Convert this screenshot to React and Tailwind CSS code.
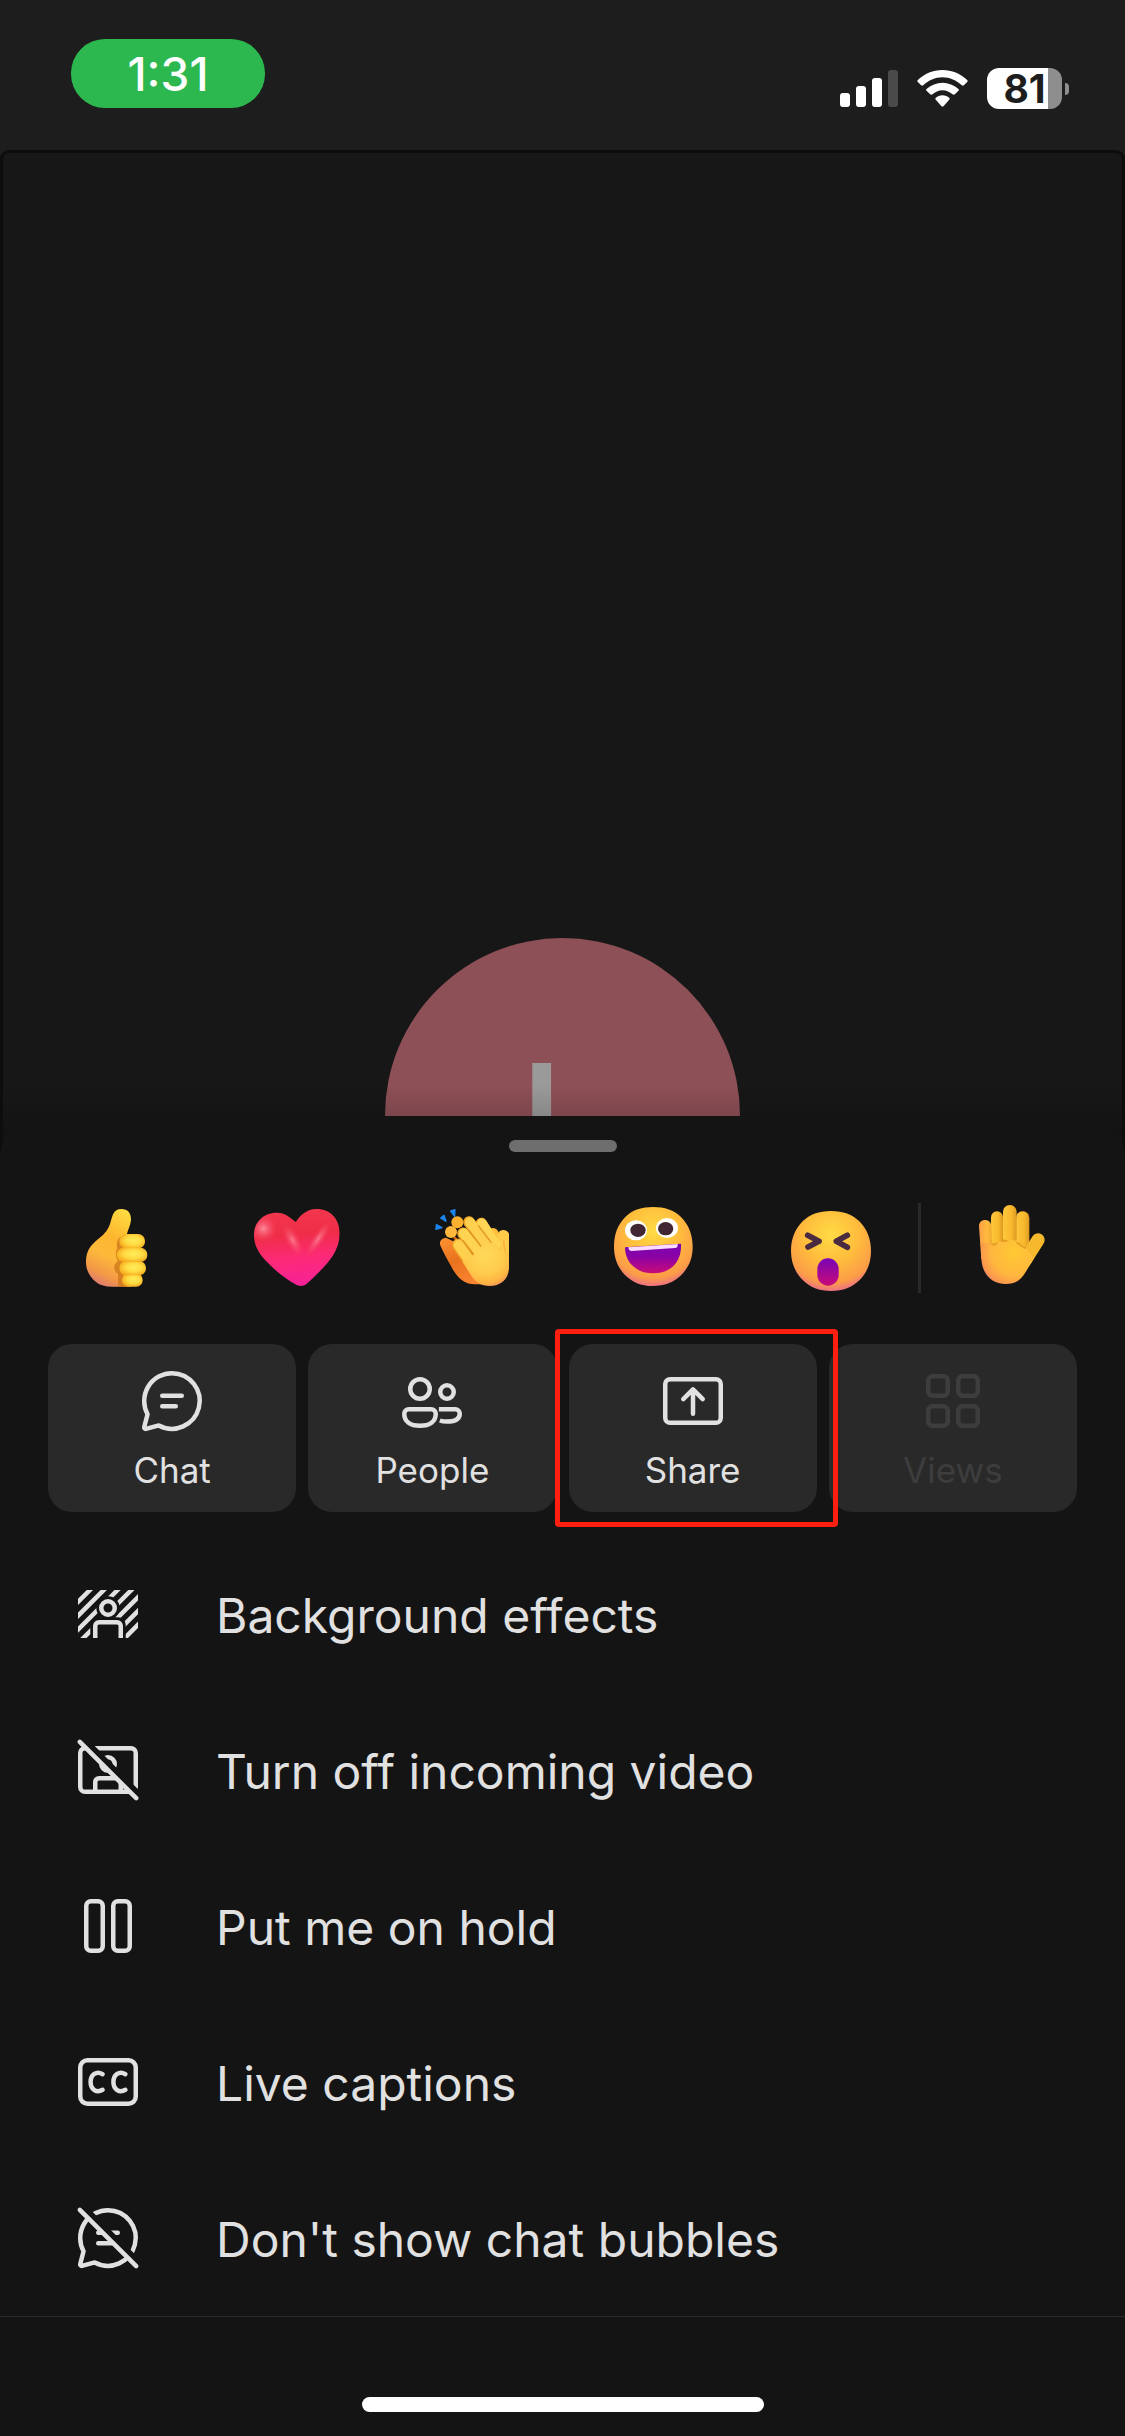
import React from 'react';

const BUBBLE =
  'M12 2.75a9.25 9.25 0 1 1-4.4 17.4L3.3 21.3a.5.5 0 0 1-.55-.65l1.1-4.25A9.25 9.25 0 0 1 12 2.75Z';

// 24 unit line icon, drawn at 72px
const Icon = ({ children }) => (
  <svg
    viewBox="0 0 24 24"
    className="w-18 h-18 shrink-0"
    fill="none"
    stroke="currentColor"
    strokeWidth="1.5"
    strokeLinecap="round"
    strokeLinejoin="round"
    aria-hidden="true"
  >
    {children}
  </svg>
);

// Diagonal slash that leaves a gap in the shape under it
const SlashedIcon = ({ id, children }) => (
  <Icon>
    <mask id={id} maskUnits="userSpaceOnUse" x="0" y="0" width="24" height="24">
      <rect width="24" height="24" fill="white" stroke="none" />
      <path d="M3 .9 23.1 21" stroke="black" strokeWidth="2.1" />
    </mask>
    <g mask={`url(#${id})`}>{children}</g>
    <path d="m2.6 2.6 18.8 18.8" />
  </Icon>
);

const ChatIcon = () => (
  <Icon>
    <path d={BUBBLE} />
    <path d="M8.75 10.25h6.5M8.75 13.75h4.5" />
  </Icon>
);

const PeopleIcon = () => (
  <Icon>
    <circle cx="8" cy="8" r="3.25" />
    <circle cx="17" cy="9" r="2.25" />
    <path d="M4.25 14.75h7.5a1.5 1.5 0 0 1 1.5 1.5c0 2.6-2 4-5.25 4s-5.25-1.4-5.25-4a1.5 1.5 0 0 1 1.5-1.5Z" />
    <path
      d="M14.3 14.75h5.45a1.5 1.5 0 0 1 1.5 1.5c0 1.9-1.8 2.6-4.25 2.6-.9 0-1.7-.1-2.4-.35"
      strokeLinecap="butt"
    />
  </Icon>
);

const ShareIcon = () => (
  <Icon>
    <rect x="2.75" y="4.75" width="18.5" height="14.5" rx="1.6" />
    <path d="M12 16.25V8.25M8.75 11.4 12 8.1l3.25 3.3" />
  </Icon>
);

const ViewsIcon = () => (
  <Icon>
    <rect x="3.75" y="3.75" width="6.5" height="6.5" rx="1.4" />
    <rect x="13.75" y="3.75" width="6.5" height="6.5" rx="1.4" />
    <rect x="3.75" y="13.75" width="6.5" height="6.5" rx="1.4" />
    <rect x="13.75" y="13.75" width="6.5" height="6.5" rx="1.4" />
  </Icon>
);

const BackgroundIcon = () => (
  <Icon>
    <mask id="person-cut" maskUnits="userSpaceOnUse" x="2" y="4" width="20" height="16">
      <rect x="2" y="4" width="20" height="16" fill="white" stroke="none" />
      <circle cx="12" cy="10" r="3.9" fill="black" stroke="none" />
      <path d="M6.1 20v-4.3a2.6 2.6 0 0 1 2.6-2.6h6.6a2.6 2.6 0 0 1 2.6 2.6V20Z" fill="black" stroke="none" />
    </mask>
    <path
      mask="url(#person-cut)"
      strokeLinecap="butt"
      d="M0 10 10 0M0 14.6 14.6 0M0 19.2 19.2 0M0 23.8 23.8 0M4.4 24 28.4 0M9 24 33 0M13.6 24 37.6 0"
    />
    <circle cx="12" cy="10" r="2.25" />
    <path d="M7.75 20v-4a1.25 1.25 0 0 1 1.25-1.25h6A1.25 1.25 0 0 1 16.25 16v4" strokeLinecap="butt" />
  </Icon>
);

const VideoOffIcon = () => (
  <SlashedIcon id="video-off">
    <rect x="2.75" y="4.75" width="18.5" height="14.5" rx="1.6" />
    <circle cx="12" cy="10" r="2.25" />
    <path d="M7.75 19.25V16A1.25 1.25 0 0 1 9 14.75h6A1.25 1.25 0 0 1 16.25 16v3.25" />
  </SlashedIcon>
);

const HoldIcon = () => (
  <Icon>
    <rect x="4.75" y="3.75" width="5.5" height="16.5" rx="1.5" />
    <rect x="13.75" y="3.75" width="5.5" height="16.5" rx="1.5" />
  </Icon>
);

const CaptionsIcon = () => (
  <Icon>
    <rect x="2.75" y="4.75" width="18.5" height="14.5" rx="2.4" />
    <path d="M10.2 9.4C8.2 8.2 6.2 9.5 6.2 12s2 3.8 4 2.6M17.8 9.4c-2-1.2-4 .1-4 2.6s2 3.8 4 2.6" />
  </Icon>
);

const BubblesOffIcon = () => (
  <SlashedIcon id="bubbles-off">
    <path d={BUBBLE} />
    <path d="M8.75 10.25h6.5M8.75 13.75h4.5" />
  </SlashedIcon>
);

const ThumbsUp = () => (
  <svg viewBox="36 69 270 270" className="w-[90px] h-[90px]">
    <defs>
      <linearGradient id="thumb" x1=".65" y1="0" x2=".35" y2="1">
        <stop offset="0" stopColor="#ffd83f" />
        <stop offset=".35" stopColor="#fcb52e" />
        <stop offset=".6" stopColor="#fdb93a" />
        <stop offset=".85" stopColor="#f39748" />
        <stop offset="1" stopColor="#dc7a72" />
      </linearGradient>
      <radialGradient id="knuckle" cx=".55" cy=".45" r=".6">
        <stop offset="0" stopColor="#ffec5c" />
        <stop offset=".5" stopColor="#ffdc43" />
        <stop offset="1" stopColor="#f6a71d" />
      </radialGradient>
    </defs>
    <path
      fill="url(#thumb)"
      d="M185 87c18 0 28 12 28 30 0 17-10 32-13 50l14 20v133h-58c-20 0-36-4-48-14-19-15-30-36-30-61 0-29 12-48 33-65 18-14 31-25 39-48 8-24 8-45 35-45Z"
    />
    <path fill="#cb7419" d="M186 168c-14 6-18 22-14 36-6 12-6 28 2 40-14 6-16 28 0 38v38h26V170Z" opacity=".75" />
    <rect x="186" y="280" width="62" height="40" rx="19" fill="url(#knuckle)" />
    <rect x="178" y="243" width="80" height="43" rx="21" fill="url(#knuckle)" />
    <rect x="178" y="162" width="77" height="44" rx="21" fill="url(#knuckle)" />
    <rect x="170" y="203" width="92" height="43" rx="21" fill="url(#knuckle)" />
  </svg>
);

const Heart = () => (
  <svg viewBox="570 69 270 270" className="w-[90px] h-[90px]">
    <defs>
      <linearGradient id="heart" x1=".45" y1="0" x2=".55" y2="1">
        <stop offset="0" stopColor="#f43a4e" />
        <stop offset=".35" stopColor="#ef2d48" />
        <stop offset=".62" stopColor="#fd2a78" />
        <stop offset="1" stopColor="#f41fa0" />
      </linearGradient>
      <radialGradient id="shine">
        <stop offset="0" stopColor="#ff8a9c" />
        <stop offset="1" stopColor="#f7405c" stopOpacity="0" />
      </radialGradient>
      <clipPath id="heart-shape">
        <path d="M708 126c8-14 28-39 62-39 42 0 69 31 69 73 0 38-18 70-48 102-16 17-34 34-49 48-11 10-24 10-36 3-25-14-57-38-81-63-27-27-43-51-43-85 0-40 30-67 68-67 30 0 42 18 58 28Z" />
      </clipPath>
    </defs>
    <g clipPath="url(#heart-shape)">
      <rect x="570" y="69" width="270" height="270" fill="url(#heart)" />
      <circle cx="610" cy="146" r="42" fill="url(#shine)" />
      <ellipse cx="698" cy="180" rx="22" ry="54" transform="rotate(-28 698 180)" fill="url(#shine)" opacity=".8" />
      <ellipse cx="775" cy="176" rx="18" ry="66" transform="rotate(34 775 176)" fill="url(#shine)" opacity=".8" />
    </g>
  </svg>
);

const Clap = () => (
  <svg viewBox="54 69 270 270" className="w-[90px] h-[90px]">
    <defs>
      <linearGradient id="clap-back" x1="0" y1="0" x2=".6" y2="1">
        <stop offset="0" stopColor="#ff9433" />
        <stop offset=".5" stopColor="#e8721d" />
        <stop offset="1" stopColor="#fb8430" />
      </linearGradient>
      <radialGradient id="clap-palm" gradientUnits="userSpaceOnUse" cx="225" cy="225" r="105">
        <stop offset="0" stopColor="#ffd95a" />
        <stop offset=".55" stopColor="#ffcb4c" />
        <stop offset=".8" stopColor="#ffb443" />
        <stop offset="1" stopColor="#e98463" />
      </radialGradient>
      <clipPath id="clap-edge">
        <rect x="54" y="69" width="243" height="270" />
      </clipPath>
    </defs>
    <g clipPath="url(#clap-edge)">
      <g fill="#1c86ee" stroke="#1c86ee" strokeWidth="4" strokeLinejoin="round">
        <path d="m122 93 13-4-1 20Z" />
        <path d="m92 114 10-8 6 18Z" />
        <path d="m79 134 17 9-18 5Z" />
      </g>
      <path fill="url(#clap-back)" d="M108 173c-16 2-22 14-16 26 10 22 22 44 37 70 17 29 38 44 66 44h35l-60-110Z" />
      <circle cx="142" cy="127" r="18" fill="#ffb02e" />
      <circle cx="123" cy="156" r="18" fill="#ffb83c" />
      <path d="m132 172 22 20" stroke="#d46414" strokeWidth="8" />
      <rect x="232" y="144" width="34" height="60" rx="17" fill="#ffc13a" />
      <rect x="262" y="150" width="36" height="80" rx="17" fill="#ffcb4a" />
      <g strokeLinecap="round" fill="none">
        <path d="m214 130 42 70" stroke="#eda127" strokeWidth="34" />
        <path d="m216 130 42 66" stroke="#ffd654" strokeWidth="30" />
        <path d="m177 126 52 74" stroke="#eda127" strokeWidth="35" />
        <path d="m180 127 52 70" stroke="#ffd050" strokeWidth="30" />
        <path d="m159 160 52 68" stroke="#eda127" strokeWidth="35" />
        <path d="m161 160 54 66" stroke="#ffd452" strokeWidth="30" />
        <path d="m144 194 54 80" stroke="#f2a42b" strokeWidth="36" />
        <path d="m146 195 54 76" stroke="#ffcf4e" strokeWidth="31" />
      </g>
      <path
        fill="url(#clap-palm)"
        d="m191 224 10-6 10-20 20-2 20-12c14 20 32 36 46 36v42c0 35-24 56-58 56-26 0-42-10-56-32l-26-42Z"
      />
      <path
        d="m160 183 29 38M177 152l35 46M206 138l37 49"
        stroke="#dc8c1c"
        strokeWidth="5"
        strokeLinecap="round"
        opacity=".7"
      />
      <path d="M281 180c0 18 4 28 6 38" stroke="#efa63a" strokeWidth="4" fill="none" opacity=".7" />
    </g>
  </svg>
);

const FaceFill = ({ id }) => (
  <radialGradient id={id} cx=".5" cy=".3" r=".75">
    <stop offset="0" stopColor="#ffdb45" />
    <stop offset=".45" stopColor="#ffbd3c" />
    <stop offset=".8" stopColor="#fb9c48" />
    <stop offset=".94" stopColor="#ec6f85" />
    <stop offset="1" stopColor="#e2639b" />
  </radialGradient>
);

const Laugh = () => (
  <svg viewBox="588 69 270 270" className="w-[90px] h-[90px]">
    <defs>
      <FaceFill id="laugh" />
      <linearGradient id="laugh-mouth" x1="0" y1="0" x2="0" y2="1">
        <stop offset="0" stopColor="#7704b5" />
        <stop offset=".45" stopColor="#8b02a4" />
        <stop offset="1" stopColor="#ca0b78" />
      </linearGradient>
    </defs>
    <path
      fill="url(#laugh)"
      d="M730 81c34 0 62 9 83 30 23 23 35 53 35 90 0 34-12 62-34 84s-50 33-86 33-62-12-84-34c-21-22-32-50-32-83 0-38 11-67 34-90 22-22 50-30 84-30Z"
    />
    <ellipse cx="678" cy="151" rx="33" ry="30" fill="#fff" />
    <ellipse cx="771" cy="144" rx="33" ry="30" fill="#fff" />
    <ellipse cx="684" cy="151" rx="23" ry="20" fill="#412733" />
    <ellipse cx="767" cy="146" rx="23" ry="20" fill="#412733" />
    <path fill="url(#laugh-mouth)" d="m645 202 168-11c3 52-28 89-84 89-50 0-84-32-84-78Z" />
    <path fill="#f9dcff" d="m655 202 148-10c1 8-2 12-8 12l-130 9c-6 0-10-4-10-11Z" />
  </svg>
);

const Surprised = () => (
  <svg viewBox="72 69 270 270" className="w-[90px] h-[90px]">
    <defs>
      <FaceFill id="surprised" />
      <linearGradient id="surprised-mouth" x1="0" y1="0" x2="0" y2="1">
        <stop offset="0" stopColor="#7704b5" />
        <stop offset="1" stopColor="#ca0b78" />
      </linearGradient>
    </defs>
    <path
      fill="url(#surprised)"
      d="M213 93c36 0 64 10 85 31 23 23 35 53 35 89s-12 65-34 87-50 33-86 33-63-11-85-33-35-51-35-87 12-66 35-89c21-21 49-31 85-31Z"
    />
    <path
      d="m143 166 34 18-33 17M262 166l-33 18 33 18"
      fill="none"
      stroke="#4a2b3f"
      strokeWidth="17"
      strokeLinecap="round"
      strokeLinejoin="round"
    />
    <rect x="172" y="235" width="64" height="82" rx="32" fill="url(#surprised-mouth)" />
  </svg>
);

const RaisedHand = () => (
  <svg viewBox="618 69 270 270" className="w-[90px] h-[90px]">
    <defs>
      <linearGradient id="finger" x1="0" y1="0" x2="1" y2="0">
        <stop offset="0" stopColor="#ffc63c" />
        <stop offset=".6" stopColor="#f8b92d" />
        <stop offset="1" stopColor="#dd9a22" />
      </linearGradient>
      <linearGradient id="pinky" x1="0" y1="0" x2="1" y2="0">
        <stop offset="0" stopColor="#ff9f47" />
        <stop offset=".6" stopColor="#ffbb3d" />
        <stop offset="1" stopColor="#eda62c" />
      </linearGradient>
      <radialGradient id="palm" gradientUnits="userSpaceOnUse" cx="765" cy="215" r="118">
        <stop offset="0" stopColor="#ffc933" />
        <stop offset=".6" stopColor="#ffb73e" />
        <stop offset=".85" stopColor="#fb9a4c" />
        <stop offset="1" stopColor="#ee7d6d" />
      </radialGradient>
    </defs>
    <rect x="693" y="94" width="36" height="110" rx="18" fill="url(#finger)" />
    <rect x="768" y="94" width="40" height="110" rx="19" fill="url(#finger)" />
    <rect x="729" y="75" width="41" height="120" rx="20" fill="url(#finger)" />
    <path d="m834 180-38 60" stroke="#f6b92e" strokeWidth="40" strokeLinecap="round" />
    <path fill="url(#pinky)" d="M657 138c0-24 36-24 37 0l4 100h-34Z" />
    <path
      fill="url(#palm)"
      d="M662 190h32c6 6 14 4 20-2 10-10 48-12 60-2 10 10 18 16 26 20l22 28c-8 14-16 28-25 42-15 26-32 36-60 36-40 0-71-28-73-77Z"
    />
    <path
      d="M697 192c4 2 8 2 12-1M726 183h14M772 188c8 6 14 12 22 16"
      stroke="#d98c1b"
      strokeWidth="6"
      fill="none"
      strokeLinecap="round"
      opacity=".6"
    />
  </svg>
);

const reactions = [
  { label: 'Like', Art: ThumbsUp },
  { label: 'Love', Art: Heart },
  { label: 'Applause', Art: Clap },
  { label: 'Laugh', Art: Laugh },
  { label: 'Surprised', Art: Surprised },
];

const tiles = [
  { label: 'Chat', Glyph: ChatIcon },
  { label: 'People', Glyph: PeopleIcon },
  { label: 'Share', Glyph: ShareIcon, highlighted: true },
  { label: 'Views', Glyph: ViewsIcon, disabled: true },
];

const menu = [
  { label: 'Background effects', Glyph: BackgroundIcon },
  { label: 'Turn off incoming video', Glyph: VideoOffIcon },
  { label: 'Put me on hold', Glyph: HoldIcon },
  { label: 'Live captions', Glyph: CaptionsIcon },
  { label: "Don't show chat bubbles", Glyph: BubblesOffIcon },
];

const StatusBar = () => (
  <header className="h-[150px] shrink-0 flex items-start justify-between pl-[71px] pr-14">
    <div className="mt-[39px] w-[194px] h-[69px] rounded-[34px] bg-[#2db84f] flex items-center justify-center text-white text-[46px] leading-none font-medium">
      1:31
    </div>
    <div className="mt-[68px] h-[41px] flex items-center">
      <svg viewBox="0 0 58 37" className="w-[58px] h-[37px]" fill="#fff">
        <rect y="23" width="10" height="14" rx="3" />
        <rect x="16" y="16" width="10" height="21" rx="3" />
        <rect x="32" y="8" width="10" height="29" rx="3" />
        <rect x="48" width="10" height="37" rx="3" fill="#4a4a4a" />
      </svg>
      <svg viewBox="412 120 152 111" className="ml-[19px] w-[51px] h-[37px]" fill="#fff">
        <path d="M488 120c28 0 54 11 74 30 2 2 2 4 0 6l-10 10c-2 2-4 2-6 0-16-15-36-24-58-24s-42 9-58 24c-2 2-4 2-6 0l-10-10c-2-2-2-4 0-6 20-19 46-30 74-30Z" />
        <path d="M488 158c18 0 34 7 47 18 2 2 3 4 1 6l-11 11c-2 2-5 2-7 0-8-7-18-12-30-12s-22 5-30 12c-2 2-5 2-7 0l-11-11c-2-2-1-4 1-6 13-11 29-18 47-18Z" />
        <path d="M488 196c8 0 15 3 20 7 2 2 2 4 0 6l-17 20c-2 2-4 2-6 0l-17-20c-2-2-2-4 0-6 5-4 12-7 20-7Z" />
      </svg>
      <div className="ml-[19px] w-[75px] h-[41px] rounded-xl bg-[linear-gradient(90deg,#fff_61px,#8e8e8e_61px)] flex items-center justify-center text-[#1d1d1d] text-[39px] leading-none font-bold">
        81
      </div>
      <div className="ml-[3px] w-1 h-3 rounded-r-full bg-[#8e8e8e]" />
    </div>
  </header>
);

const Stage = () => (
  <section className="relative flex-1 -mb-12 flex items-end justify-center overflow-hidden rounded-t-[9px] border-3 border-b-0 border-[#0d0d0d] bg-[#171717]">
    <div className="-mb-[129px] size-[355px] rounded-full bg-[#8d5056] flex items-center justify-center text-[#9a9a9a] text-[144px] leading-none font-semibold">
      L
    </div>
    <div className="absolute inset-x-0 bottom-0 h-20 bg-linear-to-b from-transparent to-black/30" />
  </section>
);

const Tile = ({ label, Glyph, highlighted, disabled }) => (
  <button
    type="button"
    disabled={disabled}
    className={`relative flex-1 h-[168px] rounded-3xl bg-[#292929] flex flex-col items-center justify-center gap-1.5 pt-1.5 ${
      disabled ? 'text-[#3d3d3d]' : 'text-[#e1e1e1]'
    }`}
  >
    <Glyph />
    <span className="text-[35px] leading-[54px]">{label}</span>
    {highlighted && (
      <span className="absolute z-10 -inset-y-[15px] -left-[14px] -right-[21px] border-[5px] border-[#ff1f10] rounded-[4px]" />
    )}
  </button>
);

const App = () => {
  return (
    <main className="min-h-screen flex flex-col bg-[#1d1d1d] font-[Inter,sans-serif]">
      <StatusBar />
      <Stage />
      <section className="relative flex flex-col rounded-t-[40px] bg-[#141414] pt-6">
        <div className="self-center w-[108px] h-3 rounded-full bg-[#6e6e6e]" />

        {/* Reactions */}
        <div className="mt-[51px] flex items-center pl-7 pr-6">
          {reactions.map(({ label, Art }) => (
            <button key={label} type="button" aria-label={label} className="flex-1 flex justify-center">
              <Art />
            </button>
          ))}
          <div className="w-[3px] h-[90px] bg-[#292929]" />
          <button type="button" aria-label="Raise hand" className="w-[180px] flex justify-center">
            <RaisedHand />
          </button>
        </div>

        {/* Tiles */}
        <div className="mt-[51px] flex gap-3 px-12">
          {tiles.map((tile) => (
            <Tile key={tile.label} {...tile} />
          ))}
        </div>

        {/* Menu */}
        <nav className="mt-6 flex flex-col border-b border-[#2a2a2a]">
          {menu.map(({ label, Glyph }) => (
            <button
              key={label}
              type="button"
              className="h-[156px] flex items-center gap-18 px-18 text-left text-5xl text-[#e1e1e1]"
            >
              <Glyph />
              <span className="pt-1">{label}</span>
            </button>
          ))}
        </nav>

        <div className="h-[119px] flex items-end justify-center pb-6">
          <div className="w-[402px] h-[15px] rounded-full bg-white" />
        </div>
      </section>
    </main>
  );
};

export default App;
